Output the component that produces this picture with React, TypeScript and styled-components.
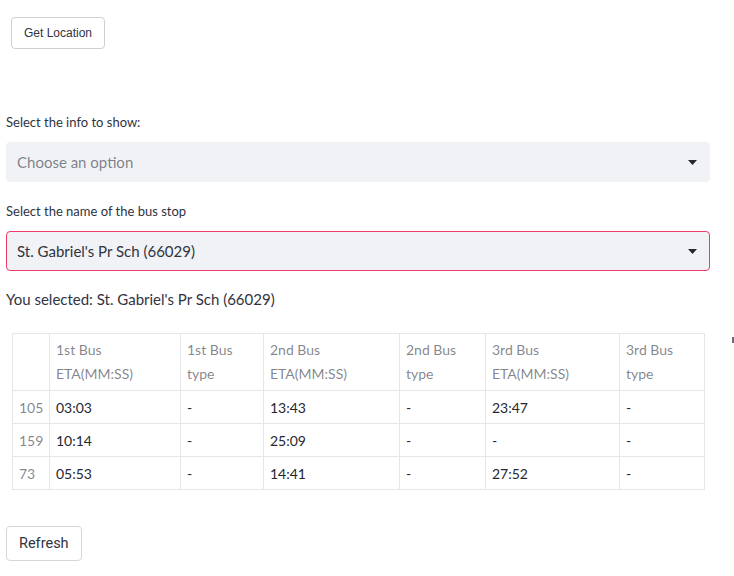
import styled, { createGlobalStyle } from "styled-components";

const GlobalStyle = createGlobalStyle`
  body {
    margin: 0;
    background: #ffffff;
    font-family: Lato, "Noto Sans", sans-serif;
    color: #31333f;
  }
`;

const rows = [
  ["105", "03:03", "-", "13:43", "-", "23:47", "-"],
  ["159", "10:14", "-", "25:09", "-", "-", "-"],
  ["73", "05:53", "-", "14:41", "-", "27:52", "-"],
];

const headers = [
  ["1st Bus", "ETA(MM:SS)"],
  ["1st Bus", "type"],
  ["2nd Bus", "ETA(MM:SS)"],
  ["2nd Bus", "type"],
  ["3rd Bus", "ETA(MM:SS)"],
  ["3rd Bus", "type"],
];

const colWidths = [37, 131, 83, 136, 86, 134, 85];

const Caret = () => (
  <svg width="9" height="5" viewBox="0 0 9 5">
    <path d="M0 0h9L4.5 5z" fill="#262730" />
  </svg>
);

const App = () => {
  return (
    <Page>
      <GlobalStyle />
      <LocationButton>Get Location</LocationButton>

      <Field $top={65}>
        <Label>Select the info to show:</Label>
        <Select>
          <Placeholder>Choose an option</Placeholder>
          <Caret />
        </Select>
      </Field>

      <Field $top={21}>
        <Label>Select the name of the bus stop</Label>
        <Select $focused>
          <Value>St. Gabriel's Pr Sch (66029)</Value>
          <Caret />
        </Select>
      </Field>

      <Selected>You selected: St. Gabriel's Pr Sch (66029)</Selected>

      <TableWrap>
        <Table>
          <colgroup>
            {colWidths.map((w, i) => (
              <col key={i} style={{ width: w }} />
            ))}
          </colgroup>
          <thead>
            <tr>
              <HeadCell />
              {headers.map((h, i) => (
                <HeadCell key={i}>
                  {h[0]}
                  <br />
                  {h[1]}
                </HeadCell>
              ))}
            </tr>
          </thead>
          <tbody>
            {rows.map((r) => (
              <tr key={r[0]}>
                {r.map((c, i) =>
                  i === 0 ? (
                    <IndexCell key={i}>{c}</IndexCell>
                  ) : (
                    <Cell key={i}>{c}</Cell>
                  )
                )}
              </tr>
            ))}
          </tbody>
        </Table>
        <Marker />
      </TableWrap>

      <RefreshButton>Refresh</RefreshButton>
    </Page>
  );
};

export default App;

const Page = styled.div`
  width: 704px;
  padding: 17px 0 0 6px;
  display: flex;
  flex-direction: column;
  align-items: flex-start;
`;

const LocationButton = styled.button`
  margin-left: 5px;
  height: 32px;
  padding: 0 12px;
  background: #ffffff;
  border: 1px solid #cfcfd3;
  border-radius: 4px;
  font-family: "Liberation Sans", Arial, sans-serif;
  font-size: 12px;
  color: #31333f;
`;

const Field = styled.div<{ $top: number }>`
  margin-top: ${(p) => p.$top}px;
  width: 704px;
  display: flex;
  flex-direction: column;
`;

const Label = styled.div`
  font-size: 13px;
  line-height: 16px;
  margin-bottom: 12px;
  color: #31333f;
`;

const Select = styled.div<{ $focused?: boolean }>`
  box-sizing: border-box;
  height: 40px;
  background: #f0f2f6;
  border-radius: 4px;
  border: 1px solid ${(p) => (p.$focused ? "#ef3a6a" : "#f0f2f6")};
  display: flex;
  align-items: center;
  justify-content: space-between;
  padding: 0 12px 0 10px;
  font-size: 15px;
`;

const Placeholder = styled.span`
  color: rgba(49, 51, 63, 0.6);
`;

const Value = styled.span`
  color: #31333f;
`;

const Selected = styled.div`
  margin-top: 18px;
  font-size: 15px;
  line-height: 20px;
`;

const TableWrap = styled.div`
  position: relative;
  margin-top: 24px;
  margin-left: 6px;
`;

const Table = styled.table`
  border-collapse: collapse;
  table-layout: fixed;
  width: 692px;
  font-size: 14px;
  border: 1px solid #e6e6ea;

  td,
  th {
    border: 1px solid #e6e6ea;
  }
`;

const HeadCell = styled.th`
  height: 56px;
  padding: 0 6px;
  text-align: left;
  font-weight: 400;
  line-height: 24px;
  color: rgba(49, 51, 63, 0.6);
  vertical-align: middle;
`;

const Cell = styled.td`
  height: 32px;
  padding: 0 6px;
  color: #262730;
`;

const IndexCell = styled(Cell)`
  color: rgba(49, 51, 63, 0.6);
`;

const Marker = styled.div`
  position: absolute;
  top: 4px;
  left: 720px;
  width: 3px;
  height: 6px;
  background: #6b6d78;
`;

const RefreshButton = styled.button`
  margin-top: 36px;
  height: 35px;
  padding: 0 12px;
  background: #ffffff;
  border: 1px solid #d6d6da;
  border-radius: 4px;
  font-family: Roboto, sans-serif;
  font-size: 14.5px;
  color: #31333f;
`;
